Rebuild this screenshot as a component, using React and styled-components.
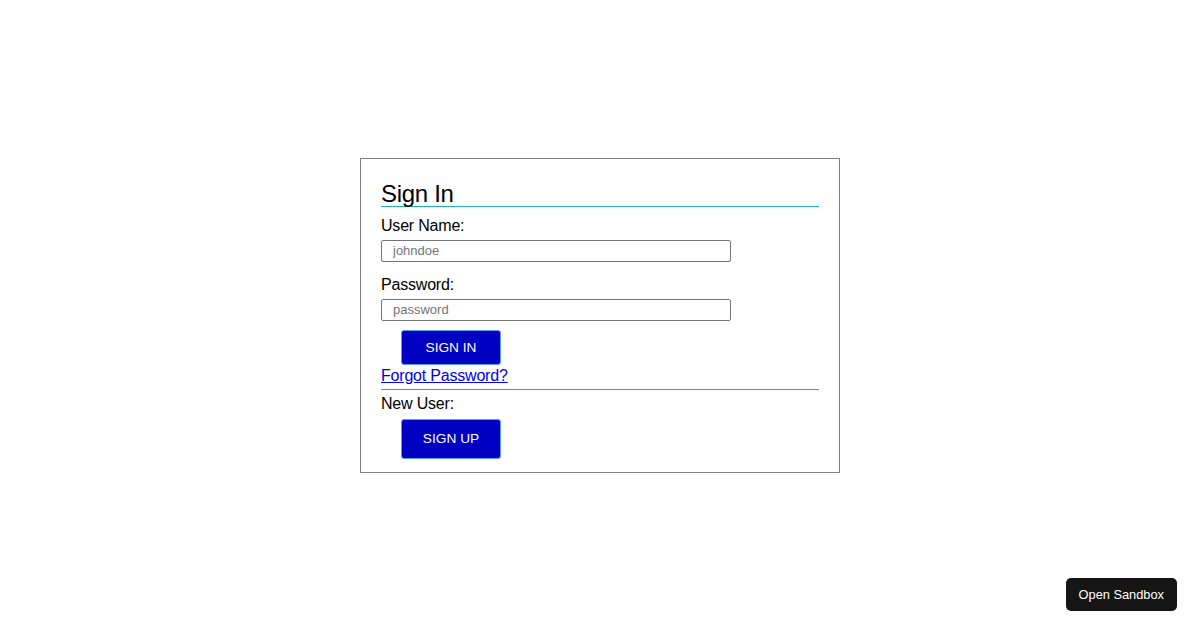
import React from "react";
import styled, { createGlobalStyle } from "styled-components";

const Global = createGlobalStyle`
  html, body { margin: 0; padding: 0; background: #fff; }
  body { font-family: "Liberation Sans", Arial, sans-serif; color: #000; }
`;

const Page = styled.div`
  min-height: 100vh;
  display: flex;
  align-items: center;
  justify-content: center;
`;

const Card = styled.form`
  box-sizing: border-box;
  width: 480px;
  height: 315px;
  border: 1px solid #808080;
  padding: 23px 20px 13px 20px;
  display: flex;
  flex-direction: column;
  align-items: flex-start;
`;

const Title = styled.h2`
  margin: 0;
  align-self: stretch;
  font-size: 24px;
  letter-spacing: -0.3px;
  font-weight: 400;
  line-height: 24px;
  height: 24px;
  border-bottom: 1px solid #20b2aa;
`;

const Label = styled.label`
  font-size: 16px;
  letter-spacing: -0.2px;
  line-height: 18px;
  height: 18px;
  margin-top: ${(p) => p.$mt}px;
`;

const Input = styled.input`
  box-sizing: border-box;
  width: 350px;
  height: 22px;
  margin-top: 5px;
  padding: 0 11px;
  border: 1px solid #767676;
  border-radius: 2px;
  font-family: "Liberation Sans", Arial, sans-serif;
  font-size: 13px;
  outline: none;
  &::placeholder { color: #757575; }
`;

const Button = styled.button`
  box-sizing: border-box;
  width: 100px;
  height: ${(p) => p.$h}px;
  margin-left: 20px;
  margin-top: ${(p) => p.$mt}px;
  background: #0000c2;
  color: #fff;
  border: 1px solid #5a9cf0;
  border-radius: 3px;
  font-family: "Liberation Sans", Arial, sans-serif;
  font-size: 13.7px;
  text-transform: uppercase;
  cursor: pointer;
`;

const Link = styled.a`
  font-size: 16px;
  letter-spacing: -0.2px;
  line-height: 18px;
  height: 18px;
  color: #0000ee;
  text-decoration: underline;
  margin-top: 2px;
`;

const Rule = styled.hr`
  align-self: stretch;
  margin: 4px 0 0 0;
  border: 0;
  border-top: 1px solid #3aa39a;
  height: 0;
`;

const SandboxButton = styled.button`
  position: fixed;
  right: 23px;
  bottom: 19px;
  height: 33px;
  padding: 0 13px;
  background: #151515;
  color: #fff;
  border: 0;
  border-radius: 5px;
  font-family: "Liberation Sans", Arial, sans-serif;
  font-size: 12.8px;
`;

export default function App() {
  return (
    <>
      <Global />
      <Page>
        <Card onSubmit={(e) => e.preventDefault()}>
          <Title>Sign In</Title>
          <Label $mt={10}>User Name:</Label>
          <Input placeholder="johndoe" />
          <Label $mt={14}>Password:</Label>
          <Input type="password" placeholder="password" />
          <Button $mt={9} $h={35}>Sign In</Button>
          <Link href="#">Forgot Password?</Link>
          <Rule />
          <Label $mt={5}>New User:</Label>
          <Button $mt={6} $h={40}>Sign Up</Button>
        </Card>
      </Page>
      <SandboxButton>Open Sandbox</SandboxButton>
    </>
  );
}
